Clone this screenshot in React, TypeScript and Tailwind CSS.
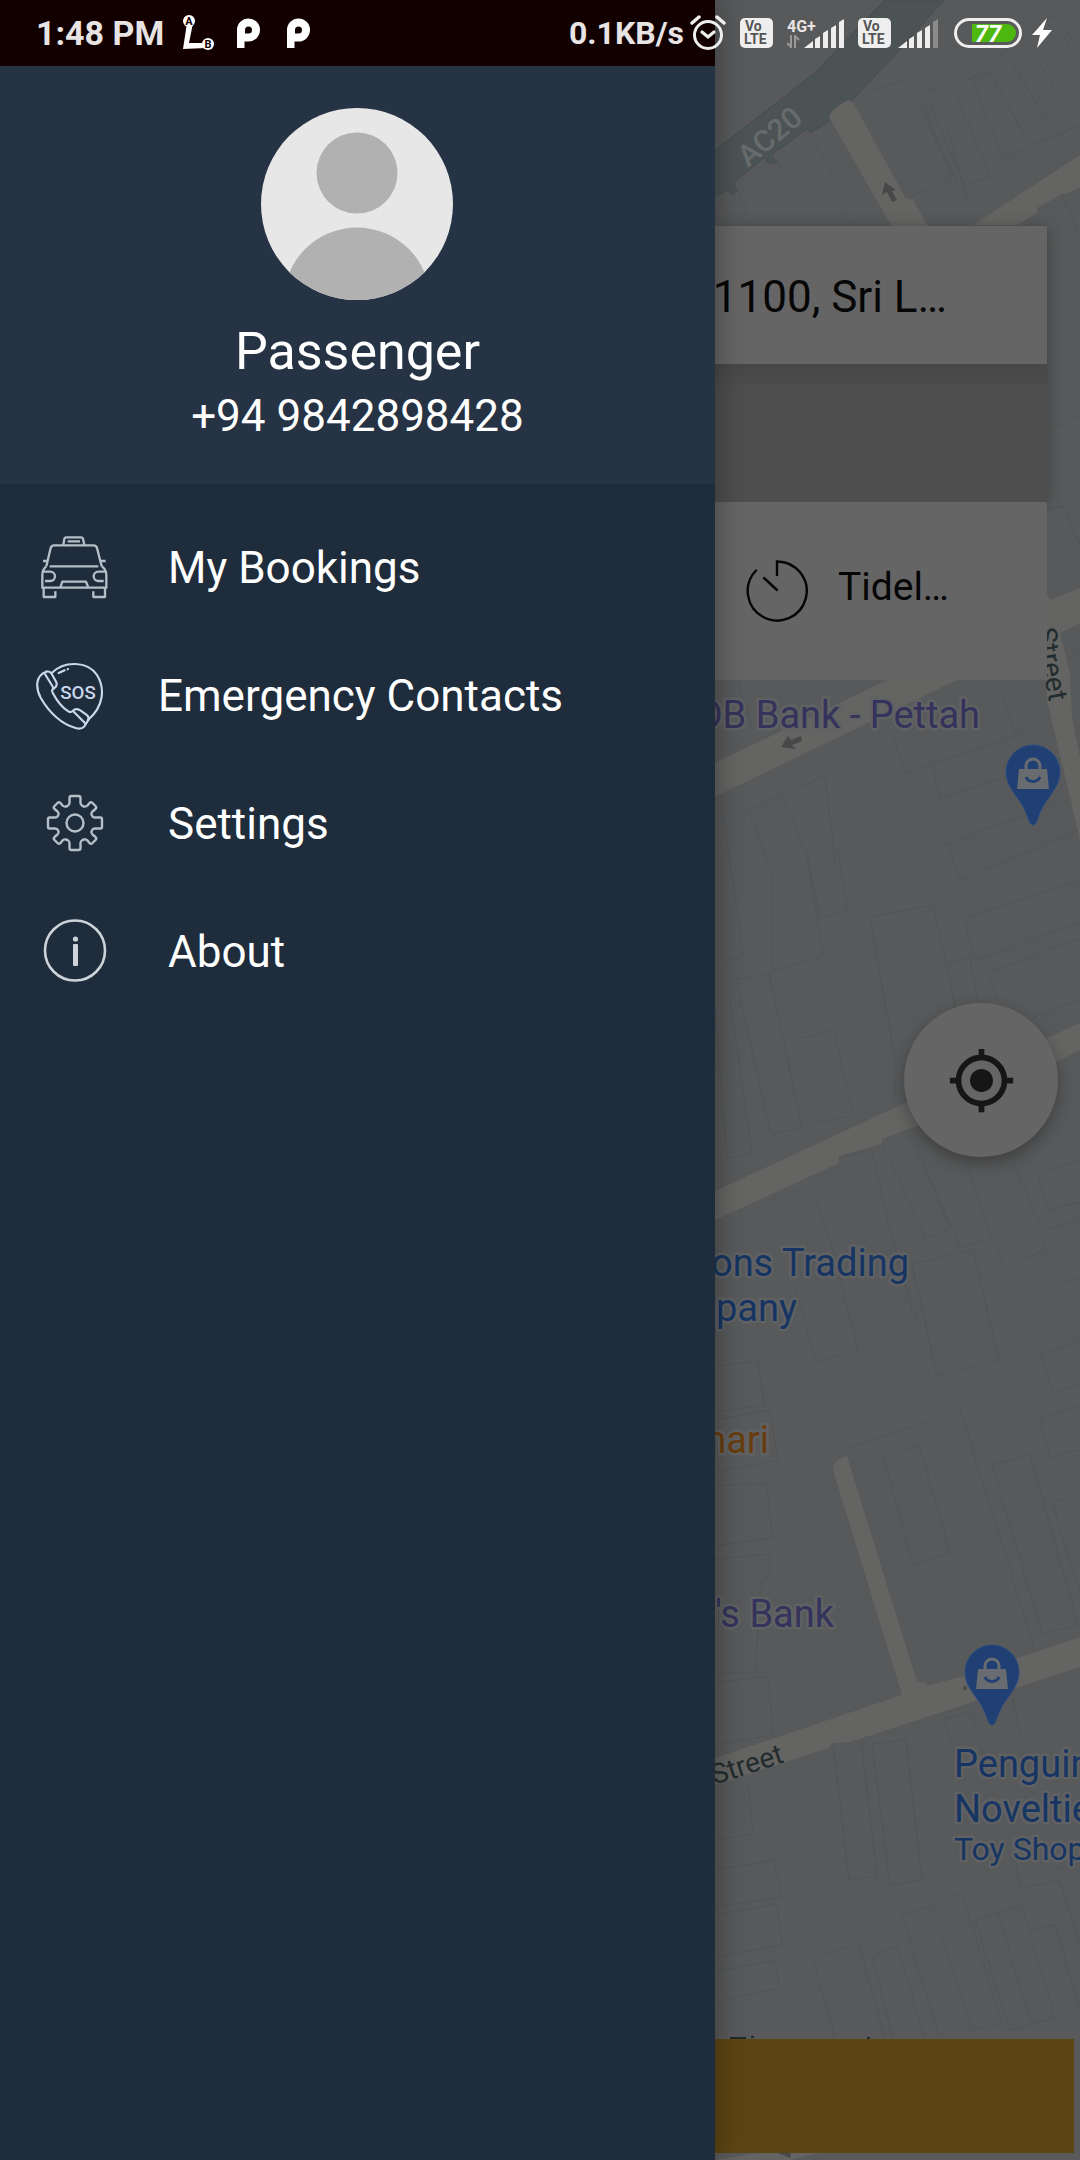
import type { ReactNode } from "react";
import { MdMyLocation } from "react-icons/md";

/* ---------- Status bar icons ---------- */

function RouteIcon() {
  return (
    <svg width="34" height="36" viewBox="0 0 34 36" aria-hidden="true">
      <path d="M5 8L11 8L7 28L24 28L24 33L1 34Z" fill="#fff" />
      <circle cx="7" cy="6" r="6" fill="#fff" />
      <circle cx="26" cy="29" r="6" fill="#fff" />
      <text x="7" y="10" fontSize="11" fontWeight="700" textAnchor="middle" fill="#120000">
        A
      </text>
      <text x="26" y="33" fontSize="11" fontWeight="700" textAnchor="middle" fill="#120000">
        B
      </text>
    </svg>
  );
}

function ParkLogo() {
  return (
    <svg width="24" height="30" viewBox="0 0 24 30" aria-hidden="true">
      <path
        fillRule="evenodd"
        fill="#fff"
        d="M1 30V12A11.500 11.500 0 1 1 12.500 23.500H8.500V30ZM12.500 8.500A3.500 3.500 0 0 0 9 12V15.500H12.500A3.500 3.500 0 1 0 12.500 8.500Z"
      />
    </svg>
  );
}

function AlarmIcon() {
  return (
    <svg width="36" height="36" viewBox="0 0 36 36" fill="none" stroke="#eee" strokeLinecap="round" aria-hidden="true">
      <circle cx="18" cy="20" r="13.500" strokeWidth="3" />
      <path d="M2 8L9 2M34 8L27 2" strokeWidth="3.500" />
      <path d="M12 17L18 22L24 17" strokeWidth="3.200" />
    </svg>
  );
}

function VolteIcon() {
  return (
    <svg width="33" height="30" viewBox="0 0 33 30" aria-label="VoLTE">
      <rect width="33" height="30" rx="5" fill="#eee" />
      <g fill="#555" fontWeight="700">
        <text x="5" y="13" fontSize="14">
          Vo
        </text>
        <text x="4" y="26" fontSize="14">
          LTE
        </text>
      </g>
    </svg>
  );
}

function SignalBars({ weak = false }: { weak?: boolean }) {
  return (
    <svg width="40" height="29" viewBox="0 0 40 29" fill="#eee" aria-hidden="true">
      <path d="M0 29L9 22V29Z" />
      <path d="M11 20L16 17V29H11Z" />
      <path d="M19 14L24 11V29H19Z" />
      <path d="M27 9L32 6V29H27Z" />
      <path d="M35 3L40 0V29H35Z" fill={weak ? "#8b8b8b" : "#eee"} />
    </svg>
  );
}

function BatteryIcon() {
  return (
    <svg width="68" height="30" viewBox="0 0 68 30" aria-label="Battery 77%">
      <rect x="1.500" y="1.500" width="65" height="27" rx="13.500" fill="none" stroke="#eee" strokeWidth="3" />
      <path d="M18 6H53A9 9 0 0 1 53 24H18Z" fill="#4db80f" />
      <text x="34" y="23.500" fontSize="24" fontWeight="700" fontStyle="italic" textAnchor="middle" fill="#fff">
        77
      </text>
    </svg>
  );
}

function StatusBar() {
  return (
    <header className="absolute inset-x-0 top-0 z-30 flex h-[66px] items-center pr-7 pl-9 text-[#e8e4e4]">
      <span className="text-[34px] leading-10 font-bold">1:48 PM</span>
      <span className="ml-[18px]">
        <RouteIcon />
      </span>
      <span className="ml-5 flex gap-[26px]">
        <ParkLogo />
        <ParkLogo />
      </span>
      <span className="ml-auto text-[32px] leading-10 font-bold">0.1KB/s</span>
      <span className="ml-[6px] flex items-center">
        <AlarmIcon />
      </span>
      <span className="ml-[14px]">
        <VolteIcon />
      </span>
      <span className="ml-[14px] flex items-end">
        <span className="flex w-[17px] flex-col">
          <span className="text-[16px] leading-4 font-bold">4G+</span>
          <svg width="13" height="13" viewBox="0 0 13 13" fill="none" stroke="#999" strokeWidth="2" aria-hidden="true">
            <path d="M4 0V12L0 8M8 13V1L12 5" />
          </svg>
        </span>
        <SignalBars />
      </span>
      <span className="ml-[14px] flex items-end gap-[7px]">
        <VolteIcon />
        <SignalBars weak />
      </span>
      <span className="ml-4">
        <BatteryIcon />
      </span>
      <svg className="ml-2.5" width="20" height="30" viewBox="0 0 20 30" fill="#fff" aria-hidden="true">
        <path d="M15 0L0 17H8L5 30L20 12H11Z" />
      </svg>
    </header>
  );
}

/* ---------- Drawer icons ---------- */

function TaxiIcon() {
  return (
    <svg width="68" height="64" viewBox="32 30 204 192" fill="none" stroke="#b4bfc8" strokeWidth="7" strokeLinejoin="round" aria-hidden="true">
      <path d="M99 57L102 38Q103 34 108 34H152Q157 34 158 38L162 57M112 46H149" />
      <path d="M48 121L61 66Q63 58 71 58H190Q198 58 200 66L214 121" />
      <path d="M58 121H204M38 105H51M211 105H226" />
      <path d="M48 121Q36 130 36 148V185H228V148Q228 130 214 121" />
      <path d="M40 185V213H75V196M224 185V213H189V196" />
      <path d="M38 137H60A14 14 0 0 1 60 165H44M226 137H204A14 14 0 0 0 204 165H220" />
      <path d="M90 185L96 167H167L174 185" />
    </svg>
  );
}

function SosIcon() {
  return (
    <svg width="68" height="68" viewBox="15 405 204 204" fill="none" stroke="#c9d6ec" strokeWidth="6.500" strokeLinejoin="round" strokeLinecap="round" aria-hidden="true">
      <path d="M62 438C100 400 170 402 198 444C224 486 216 540 173 577" />
      <path d="M46 434C12 446 14 484 29 512C54 556 92 592 134 603C148 607 154 605 160 598L173 577" />
      <path d="M46 434Q56 432 61 439L76 466Q80 477 69 484Q60 488 65 497C78 522 94 542 112 553Q120 558 126 551Q134 542 148 550L166 563Q176 570 171 580" />
      <path d="M40 438L64 477Q68 484 68 485M126 552L164 590" />
      <path d="M83 438L101 430M110 427L111 426" />
      <text x="141" y="517" fontSize="56" fontWeight="500" textAnchor="middle" fill="#c9d6ec" stroke="none">
        SOS
      </text>
    </svg>
  );
}

function GearIcon() {
  return (
    <svg width="68" height="64" viewBox="-34 -31 68 64" fill="none" stroke="#b4bfc8" strokeWidth="2.400" strokeLinejoin="round" aria-hidden="true">
      <path d="M-5.500 -25Q-5.500 -27 -3.500 -27H3.500Q5.500 -27 5.500 -25V-20Q5.500 -18 7.500 -17L9 -16.500Q11 -16 12.500 -17.500L14.500 -20Q16 -21.500 17.500 -20L20.500 -17Q22 -15.500 20.500 -14L17.500 -11.500Q16 -10 16.500 -8.500L17.500 -6.500Q18 -5.500 20 -5.500H25.500Q27 -5.500 27 -3.500V3.500Q27 5.500 25.500 5.500H20Q18 5.500 17.500 6.500L16.500 8.500Q16 10 17.500 11.500L20.500 14Q22 15.500 20.500 17L17.500 20Q16 21.500 14.500 20L12.500 17.500Q11 16 9 16.500L7.500 17Q5.500 18 5.500 20V25Q5.500 27 3.500 27H-3.500Q-5.500 27 -5.500 25V20Q-5.500 18 -7.500 17L-9 16.500Q-11 16 -12.500 17.500L-14.500 20Q-16 21.500 -17.500 20L-20.500 17Q-22 15.500 -20.500 14L-17.500 11.500Q-16 10 -16.500 8.500L-17.500 6.500Q-18 5.500 -20 5.500H-25.500Q-27 5.500 -27 3.500V-3.500Q-27 -5.500 -25.500 -5.500H-20Q-18 -5.500 -17.500 -6.500L-16.500 -8.500Q-16 -10 -17.500 -11.500L-20.500 -14Q-22 -15.500 -20.500 -17L-17.500 -20Q-16 -21.500 -14.500 -20L-12.500 -17.500Q-11 -16 -9 -16.500L-7.500 -17Q-5.500 -18 -5.500 -20Z" />
      <circle r="8.500" />
    </svg>
  );
}

function InfoIcon() {
  return (
    <svg width="68" height="66" viewBox="0 0 68 66" aria-hidden="true">
      <circle cx="34" cy="31.500" r="30" fill="none" stroke="#cdd3d8" strokeWidth="2.600" />
      <circle cx="34.500" cy="20" r="2.600" fill="#cdd3d8" />
      <rect x="32" y="25" width="5" height="22" rx="1" fill="#cdd3d8" />
    </svg>
  );
}

function MenuItem({ icon, label, inset = false }: { icon: ReactNode; label: string; inset?: boolean }) {
  return (
    <li>
      <button
        type="button"
        className={
          inset
            ? "flex h-32 w-full items-center gap-[54px] pl-9 text-left"
            : "flex h-32 w-full items-center gap-[59px] pl-[41px] text-left"
        }
      >
        {icon}
        <span className="text-[44px] leading-[52px]">{label}</span>
      </button>
    </li>
  );
}

function Drawer() {
  return (
    <aside className="relative z-20 w-[66.2%] shrink-0 bg-[#1e2c3b] text-white shadow-[4px_0_24px_rgba(0,0,0,0.28)]">
      <div className="h-[66px] bg-[#120000]" />
      <section className="flex flex-col items-center bg-[#263344] pt-[42px] pb-[42px]">
        <svg width="192" height="192" viewBox="0 0 192 192" aria-label="Profile picture">
          <clipPath id="avatar">
            <circle cx="96" cy="96" r="96" />
          </clipPath>
          <g clipPath="url(#avatar)">
            <rect width="192" height="192" fill="#e7e7e7" />
            <circle cx="96" cy="65" r="40.500" fill="#b1b1b1" />
            <ellipse cx="96" cy="192" rx="73" ry="72.500" fill="#b1b1b1" />
          </g>
        </svg>
        <h1 className="mt-[22px] text-[52px] leading-[60px]">Passenger</h1>
        <p className="mt-2 text-[44px] leading-[52px]">+94 9842898428</p>
      </section>
      <nav className="pt-5">
        <ul>
          <MenuItem icon={<TaxiIcon />} label="My Bookings" />
          <MenuItem icon={<SosIcon />} label="Emergency Contacts" inset />
          <MenuItem icon={<GearIcon />} label="Settings" />
          <MenuItem icon={<InfoIcon />} label="About" />
        </ul>
      </nav>
    </aside>
  );
}

/* ---------- Map ---------- */

const buildings = [
  "M853 99L904 79L925 110L996 60M904 50L931 92L1000 50M922 112L946 160L968 203L947 125M972 78L990 72L1030 145L1003 160Z",
  "M910 197L952 178L926 112M930 105L965 185L990 176L955 92M1000 55L1055 15L1080 50M1010 60L1050 125M1030 48L1073 118M1060 30L1080 65M1033 145L1080 125",
  "M772 154L798 197L833 174L807 129M735 185L752 225M815 208L835 195L852 225M1062 194L1080 235",
  "M1050 430L1080 415M1047 510L1063 506L1080 545M1085 640L1072 660",
  "M893 736L906 774L937 763M1003 697L1016 732M932 766L940 798L1080 752M937 763L1035 728M937 823L944 845L1080 795M748 810L783 795L825 776L835 860",
  "M738 680L752 730M748 810L771 868L772 971L823 957L807 855L783 797M807 855L820 918L848 910L838 850M718 780L744 957L727 961",
  "M736 979L769 974L802 1127L771 1135ZM800 1038L834 1030L853 1115L817 1123M870 917L933 905L955 1005L948 1040M870 917L896 1065L895 1100M714 1000L727 1158L752 1153L730 1000",
  "M945 840L960 880L1080 830M964 918L1075 882L1080 890M964 918L975 960L1080 923M950 963L970 958L978 1005M988 973L1080 938M988 973L998 1000M1032 1018L1080 1000",
  "M771 1200L810 1187L830 1240L858 1350L816 1363L796 1290M839 1158L872 1151L890 1230L912 1310L918 1317L885 1327M882 1142L925 1238L952 1228L905 1128",
  "M912 1130L948 1225M965 1160L990 1235M1010 1155L1040 1225M1038 1175L1080 1160M1038 1175L1048 1210L1080 1202M1048 1230L1080 1220",
  "M912 1264L973 1250L999 1360L937 1376ZM988 1230L1005 1267L1047 1250L1035 1230M955 1230L958 1248L984 1240M1065 1282L1080 1278M1041 1354L1080 1340M1041 1354L1053 1393L1080 1384M1040 1418L1080 1405M1040 1418L1050 1457L1080 1450",
  "M847 1449L960 1409L1035 1650M883 1456L919 1445L950 1552L913 1565ZM992 1465L1030 1454L1078 1625L1042 1633ZM1052 1503L1080 1495M1052 1503L1080 1590",
  "M715 1366L758 1361L764 1405L715 1412M715 1420L770 1410L778 1460L715 1472M715 1486L767 1483L772 1538L715 1546M715 1559L770 1554V1575L762 1580L755 1672L715 1674M715 1682L768 1677L773 1735L715 1745",
  "M833 1743L849 1880L877 1876L861 1738M872 1744L906 1740L922 1880L890 1885ZM748 1780L753 1834L715 1840M715 1870L774 1860L782 1897L715 1907M944 1718L970 1713L985 1760M944 1718L954 1755M1012 1697L1022 1740",
  "M715 1915L777 1904L782 1945L715 1957M715 1972L775 1960L780 1988L715 2002M1015 1855L1020 1888L1062 1880L1055 1870L1080 1863M1060 1880L1080 1945",
  "M813 1960L858 1942L885 2038M813 1960L835 2038M872 1955L897 1947L925 2038M872 1955L893 2038M902 1916L962 1893L1002 2023L972 2030L932 1903M902 1916L940 2038M975 1920L1022 1906L1055 2018L1010 2030ZM997 1912L1032 2024M1032 1931L1055 1924L1080 2010",
];

function MapPin({ x, y }: { x: number; y: number }) {
  return (
    <g transform={`translate(${x} ${y})`}>
      <path d="M0 53C-5 53 -4 41 -15 27C-21 18 -27 11 -27 0A27 27 0 0 1 27 0C27 11 21 18 15 27C4 41 5 53 0 53Z" fill="#203f72" stroke="#2a4c85" strokeWidth="1" />
      <path d="M-14 -3H14L16 17H-16Z" fill="#686b70" />
      <path d="M-7 -3V-6A7 7 0 0 1 7 -6V-3" fill="none" stroke="#686b70" strokeWidth="3" />
      <path d="M-7 5A7.500 7 0 0 0 7 5" fill="none" stroke="#203f72" strokeWidth="3" />
    </g>
  );
}

function MapLayer() {
  return (
    <div className="absolute inset-0 overflow-hidden bg-[#58595a]">
      <svg className="h-full w-full" viewBox="0 0 1080 2160" preserveAspectRatio="xMinYMin slice" aria-label="Map of Pettah">
        <path
          d="M945 0L933 12L897 53L852 100L828 122L810 133L807 129L772 154L777 163L768 163L765 157L733 183L737 191L732 195L728 190L700 205V162L815 73L876 9L885 0Z"
          fill="#4b5354"
          stroke="#464c4d"
        />
        <g fill="none" stroke="#525456" strokeWidth="1">
          {buildings.map((d) => (
            <path key={d} d={d} />
          ))}
        </g>
        <g fill="#646463">
          <path d="M829 117Q830 110 848 100L853 102L905 197L913 200L928 227H892Z" />
          <path d="M1080 155L973 225H1017L1037 213V208L1062 194L1068 193L1080 187Z" />
          <path d="M700 770L887 680H957L700 804Z" />
          <path d="M1040 580L1050 600L1080 588V623L1060 633L1070 673L1072 717L1080 757V840L1047 700Z" />
          <path d="M700 1198L905 1103L1047 1038L1080 1023V1050L1057 1062L917 1126L882 1139V1144L839 1156V1163L700 1227Z" />
          <path d="M833 1470Q833 1460 847 1456L917 1682L927 1683V1686L967 1675L1080 1637V1667L850 1742L833 1743L828 1748L700 1790V1763L902 1695Z" />
          <path d="M715 2160L760 2153H820L790 2160Z" />
        </g>
        <g fill="#484848">
          <path d="M885 182L882 195L887 192L892 202L897 200L892 191L896 190Z" />
          <path d="M781 747L788 736L791 740L801 736L802 741L792 745L796 749Z" />
          <path d="M778 2153L790 2158L791 2153Z" />
          <circle cx="965" cy="1688" r="2" />
        </g>
        <path d="M730 2038H746M751 2037H754M867 2038H870" stroke="#25282a" strokeWidth="2" />
        <MapPin x={1033} y={772} />
        <MapPin x={992} y={1672} />
        <g fontSize="38" stroke="#606163" strokeWidth="5" strokeLinejoin="round" paintOrder="stroke">
          <text x="980" y="728" textAnchor="end" fill="#35325b">
            DB Bank - Pettah
          </text>
          <text x="909" y="1276" textAnchor="end" fill="#163563">
            Sons Trading
          </text>
          <text x="797" y="1321" textAnchor="end" fill="#163563">
            Company
          </text>
          <text x="769" y="1453" textAnchor="end" fill="#673d0e">
            Kumari
          </text>
          <text x="834" y="1627" textAnchor="end" fill="#35325b">
            {"People's Bank"}
          </text>
          <text x="954" y="1777" fill="#163563">
            Penguin
          </text>
          <text x="954" y="1822" fill="#163563">
            Novelties
          </text>
          <text x="954" y="1860" fontSize="32" fill="#163563">
            Toy Shop
          </text>
        </g>
        <g fontSize="28" fill="#222c2e">
          <text transform="translate(785 1762) rotate(-18)" textAnchor="end">
            Street
          </text>
          <text transform="translate(1049 702) rotate(80)" textAnchor="end">
            Street
          </text>
        </g>
        <text transform="translate(748 168) rotate(-40)" fontSize="30" fontWeight="500" fill="#686b6b">
          AC20
        </text>
      </svg>
    </div>
  );
}

/* ---------- Booking screen behind the drawer ---------- */

function TimerIcon() {
  return (
    <svg width="62" height="62" viewBox="0 0 62 62" fill="none" stroke="#060606" strokeWidth="2.400" strokeLinecap="round" aria-hidden="true">
      <path d="M31 15V1.500A29.500 29.500 0 1 1 10 10.500" />
      <path d="M18 18L31 30" />
    </svg>
  );
}

function BookingScreen() {
  return (
    <main className="relative z-10 flex min-w-0 flex-1 flex-col pt-[226px]">
      <div className="mr-[33px] shadow-[0_2px_14px_rgba(0,0,0,0.3)]">
        <div className="flex h-[138px] items-center justify-end overflow-hidden bg-[#656565] pt-1 pr-[100px] text-[44px] leading-[52px] whitespace-nowrap text-[#060606]">
          1100, Sri L…
        </div>
        <div className="h-[138px] bg-linear-to-b from-[#474747] to-[#4e4e4e] to-20%" />
      </div>
      <div className="mr-[33px] flex h-[178px] items-center bg-[#656565] pl-[31px] text-[#060606]">
        <TimerIcon />
        <span className="ml-[30px] pb-2 text-[39px] leading-[48px]">Tidel…</span>
      </div>
      <button
        type="button"
        aria-label="My location"
        className="mt-[323px] mr-[22px] flex size-[154px] items-center justify-center self-end rounded-full bg-[#656565] text-[#161616] shadow-[0_6px_16px_rgba(0,0,0,0.3)]"
      >
        <MdMyLocation size={69} />
      </button>
      <button type="button" aria-label="Continue" className="mt-auto mr-[6px] mb-[7px] h-[114px] bg-[#5c4514]" />
    </main>
  );
}

export default function App() {
  return (
    <div className="relative flex min-h-screen overflow-hidden font-[Roboto,sans-serif]">
      <MapLayer />
      <Drawer />
      <BookingScreen />
      <StatusBar />
    </div>
  );
}
